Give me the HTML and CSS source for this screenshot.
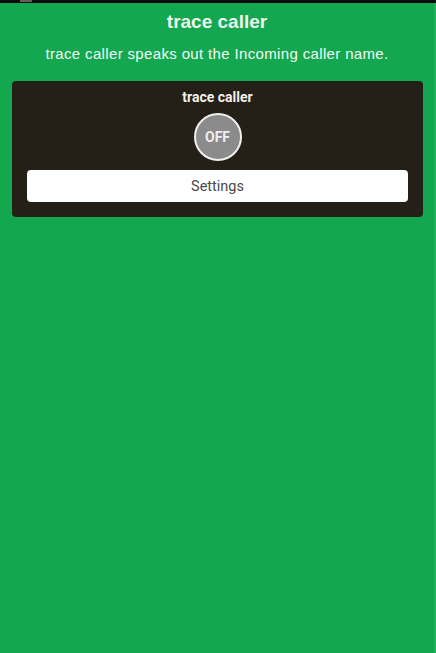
FILE: index.html
```html
<!DOCTYPE html>
<html>
<head>
<meta charset="utf-8">
<link rel="stylesheet" href="styles.css">
</head>
<body>
<div class="statusbar"><span class="notif"></span></div>
<div class="screen">
  <h1 class="title">trace caller</h1>
  <p class="subtitle">trace caller speaks out the Incoming caller name.</p>
  <div class="card">
    <div class="card-title">trace caller</div>
    <div class="toggle">OFF</div>
    <button class="settings">Settings</button>
  </div>
</div>
</body>
</html>
```
FILE: styles.css
```css
html, body {
  margin: 0;
  padding: 0;
}
body {
  width: 436px;
  height: 653px;
  background: #13a74f;
  font-family: "Liberation Sans", Arial, sans-serif;
  overflow: hidden;
  display: flex;
  flex-direction: column;
}
.statusbar {
  height: 3px;
  background: #0b0b0b;
  position: relative;
}
.notif {
  position: absolute;
  left: 20px;
  top: 0;
  width: 12px;
  height: 2px;
  background: #6d5a5a;
}
.screen {
  flex: 1;
  display: flex;
  flex-direction: column;
  align-items: stretch;
  border-right: 2px solid #1fb35c;
}
.title {
  margin: 9px 0 0;
  text-align: center;
  font-size: 19px;
  font-weight: bold;
  color: #eef7ee;
  line-height: 20px;
}
.subtitle {
  margin: 14px 0 0;
  text-align: center;
  font-size: 15px;
  letter-spacing: 0.35px;
  color: #f4faf4;
  line-height: 16px;
}
.card {
  margin: 19px 11px 0 12px;
  background: #241f17;
  border-radius: 4px;
  display: flex;
  flex-direction: column;
  align-items: center;
  padding: 8px 15px 15px;
}
.card-title {
  font-family: Roboto, "Liberation Sans", sans-serif;
  font-weight: bold;
  font-size: 14px;
  color: #f2efe8;
  line-height: 16px;
}
.toggle {
  margin-top: 8px;
  width: 44px;
  height: 44px;
  border-radius: 50%;
  border: 2px solid #f0f0ee;
  background: #8b8b8b;
  color: #eeeeee;
  font-family: Roboto, "Liberation Sans", sans-serif;
  font-weight: bold;
  font-size: 14px;
  display: flex;
  align-items: center;
  justify-content: center;
}
.settings {
  margin-top: 9px;
  align-self: stretch;
  height: 32px;
  border: none;
  border-radius: 4px;
  background: #ffffff;
  color: #4a4a4a;
  font-family: Roboto, "Liberation Sans", sans-serif;
  font-size: 14.5px;
  padding: 0;
}
```
